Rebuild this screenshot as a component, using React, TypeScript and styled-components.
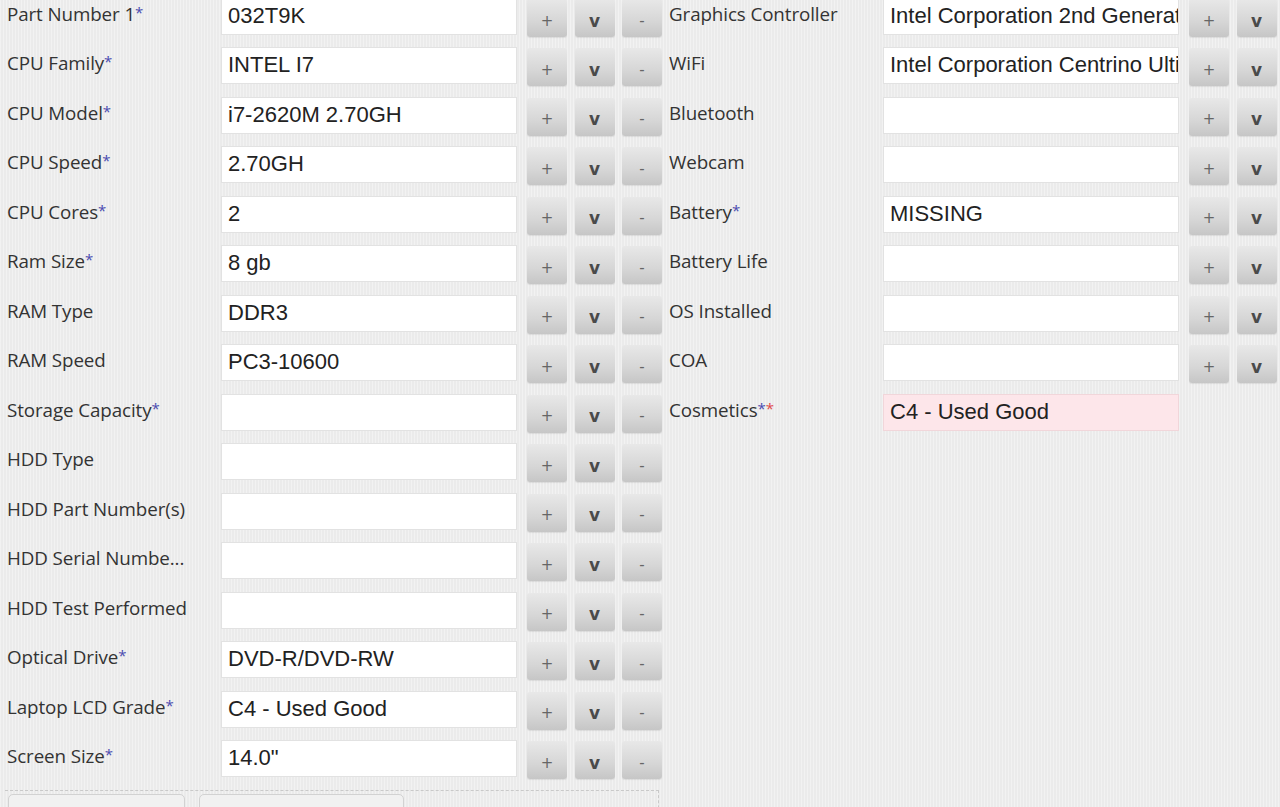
import React from "react";
import styled, { createGlobalStyle } from "styled-components";

type Field = {
  label: string;
  req?: number;
  value?: string;
  buttons?: string[];
  pink?: boolean;
};

const GlobalStyle = createGlobalStyle`
  html, body {
    margin: 0;
    padding: 0;
    overflow: hidden;
    background-color: #ebebeb;
  }
`;

const Page = styled.div`
  width: 1280px;
  height: 807px;
  overflow: hidden;
  background-color: #ebebeb;
  background-image: repeating-linear-gradient(
    90deg,
    rgba(255, 255, 255, 0.35) 0px,
    rgba(255, 255, 255, 0.35) 1px,
    transparent 1px,
    transparent 3px
  );
  font-family: "Open Sans", "Noto Sans", sans-serif;
`;

const Columns = styled.div`
  display: flex;
  gap: 8px;
  padding-left: 7px;
  margin-top: -2px;
  width: 1400px;
`;

const Column = styled.div`
  display: flex;
  flex-direction: column;
  width: 654px;
`;

const Row = styled.div`
  display: flex;
  align-items: flex-start;
  height: 49.47px;
`;

const Label = styled.div`
  width: 214px;
  flex: none;
  line-height: 33px;
  font-size: 18.8px;
  letter-spacing: -0.1px;
  color: #333;
  white-space: nowrap;
  overflow: hidden;
`;

const Star = styled.span<{ $red?: boolean }>`
  color: ${({ $red }) => ($red ? "#e04a4a" : "#4b4bb0")};
  font-size: 15px;
  vertical-align: top;
  line-height: 28px;
`;

const Input = styled.div<{ $pink?: boolean }>`
  box-sizing: border-box;
  width: 296px;
  height: 37px;
  flex: none;
  padding: 0 6px;
  background: ${({ $pink }) => ($pink ? "#fde6ea" : "#ffffff")};
  border: 1px solid ${({ $pink }) => ($pink ? "#f1d6da" : "#e2e2e2")};
  font-family: "Liberation Sans", Arial, sans-serif;
  font-size: 22px;
  line-height: 34px;
  color: #222;
  white-space: nowrap;
  overflow: hidden;
`;

const ButtonGroup = styled.div`
  display: flex;
  gap: 7.5px;
  margin-left: 10px;
  margin-top: 1px;
`;

const Button = styled.div<{ $bold?: boolean }>`
  box-sizing: border-box;
  width: 40px;
  height: 38px;
  flex: none;
  border-radius: 3px;
  background: linear-gradient(#e8e8e8, #d6d6d6 60%, #c6c6c6);
  box-shadow: 0 1px 1px rgba(0, 0, 0, 0.08);
  display: flex;
  align-items: center;
  justify-content: center;
  padding-top: 5px;
  font-family: "DejaVu Sans", Verdana, sans-serif;
  font-size: ${({ $bold }) => ($bold ? "17px" : "15px")};
  font-weight: ${({ $bold }) => ($bold ? "bold" : "normal")};
  color: ${({ $bold }) => ($bold ? "#4a4a4a" : "#666")};
`;

const Footer = styled.div`
  margin: 0 0 0 5px;
  width: 650px;
  height: 40px;
  border-top: 1px dashed #c9c9c9;
  border-right: 1px dashed #c9c9c9;
  display: flex;
  gap: 14px;
  padding: 3px 0 0 3px;
`;

const Tab = styled.div<{ $w: number }>`
  width: ${({ $w }) => $w}px;
  height: 30px;
  border: 1px solid #d2d2d2;
  border-radius: 5px 5px 0 0;
  background: #f1f1f1;
`;

const left: Field[] = [
  { label: "Part Number 1", req: 1, value: "032T9K" },
  { label: "CPU Family", req: 1, value: "INTEL I7" },
  { label: "CPU Model", req: 1, value: "i7-2620M 2.70GH" },
  { label: "CPU Speed", req: 1, value: "2.70GH" },
  { label: "CPU Cores", req: 1, value: "2" },
  { label: "Ram Size", req: 1, value: "8 gb" },
  { label: "RAM Type", value: "DDR3" },
  { label: "RAM Speed", value: "PC3-10600" },
  { label: "Storage Capacity", req: 1 },
  { label: "HDD Type" },
  { label: "HDD Part Number(s)" },
  { label: "HDD Serial Numbe..." },
  { label: "HDD Test Performed" },
  { label: "Optical Drive", req: 1, value: "DVD-R/DVD-RW" },
  { label: "Laptop LCD Grade", req: 1, value: "C4 - Used Good" },
  { label: "Screen Size", req: 1, value: "14.0\"" },
].map((f) => ({ ...f, buttons: ["+", "v", "-"] }));

const right: Field[] = [
  { label: "Graphics Controller", value: "Intel Corporation 2nd Generation Core Processor Family", buttons: ["+", "v", "-"] },
  { label: "WiFi", value: "Intel Corporation Centrino Ultimate-N 6300", buttons: ["+", "v", "-"] },
  { label: "Bluetooth", buttons: ["+", "v", "-"] },
  { label: "Webcam", buttons: ["+", "v", "-"] },
  { label: "Battery", req: 1, value: "MISSING", buttons: ["+", "v", "-"] },
  { label: "Battery Life", buttons: ["+", "v", "-"] },
  { label: "OS Installed", buttons: ["+", "v", "-"] },
  { label: "COA", buttons: ["+", "v", "-"] },
  { label: "Cosmetics", req: 2, value: "C4 - Used Good", pink: true },
];

const FieldRow = ({ field }: { field: Field }) => (
  <Row>
    <Label>
      {field.label}
      {field.req ? <Star>*</Star> : null}
      {field.req === 2 ? <Star $red>*</Star> : null}
    </Label>
    <Input $pink={field.pink}>{field.value}</Input>
    {field.buttons && (
      <ButtonGroup>
        {field.buttons.map((b) => (
          <Button key={b} $bold={b === "v"}>
            {b}
          </Button>
        ))}
      </ButtonGroup>
    )}
  </Row>
);

export default function App() {
  return (
    <Page>
      <GlobalStyle />
      <Columns>
        <Column>
          {left.map((f) => (
            <FieldRow key={f.label} field={f} />
          ))}
        </Column>
        <Column>
          {right.map((f) => (
            <FieldRow key={f.label} field={f} />
          ))}
        </Column>
      </Columns>
      <Footer>
        <Tab $w={175} />
        <Tab $w={203} />
      </Footer>
    </Page>
  );
}
